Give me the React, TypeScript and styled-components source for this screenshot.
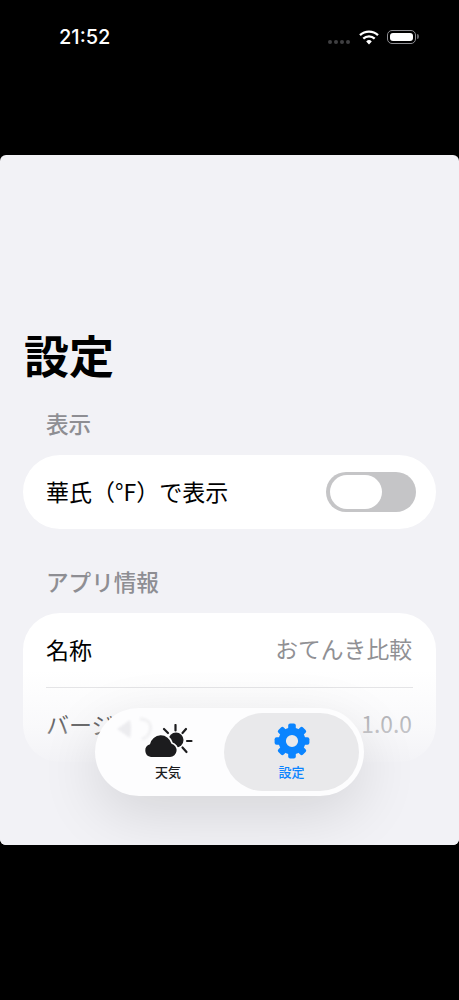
import React from "react";
import styled, { createGlobalStyle } from "styled-components";

const GlobalStyle = createGlobalStyle`
  html, body {
    margin: 0;
    padding: 0;
    background: #000;
    font-family: "Noto Sans CJK JP", "Noto Sans", sans-serif;
  }
`;

const gearAngles = [0, 45, 90, 135, 180, 225, 270, 315];
const rays = [
  [32.5, 1, 32.5, 6.5],
  [21, 5, 25, 9],
  [43, 5, 39.5, 9],
  [44, 17, 48.5, 17],
  [39.5, 23.5, 43.5, 28],
];

const App = () => {
  return (
    <>
      <GlobalStyle />
      <StatusArea>
        <Time>21:52</Time>
        <StatusIcons>
          <Signal>
            <Dot />
            <Dot />
            <Dot />
            <Dot />
          </Signal>
          <svg width="20" height="15" viewBox="0 0 20 15">
            <path d="M1 5.2a13 13 0 0 1 18 0" fill="none" stroke="#fff" strokeWidth="2.3" />
            <path d="M4.3 8.6a8.4 8.4 0 0 1 11.4 0" fill="none" stroke="#fff" strokeWidth="2.3" />
            <path d="M7.2 11.4 10 14.4l2.8-3a4 4 0 0 0-5.6 0z" fill="#fff" />
          </svg>
          <Battery>
            <BatteryFill />
          </Battery>
        </StatusIcons>
      </StatusArea>

      <Panel>
        <Title>設定</Title>

        <SectionLabel $gap={22}>表示</SectionLabel>
        <Card>
          <Row>
            <RowLabel>華氏（°F）で表示</RowLabel>
            <Switch>
              <Knob />
            </Switch>
          </Row>
        </Card>

        <SectionLabel $gap={37}>アプリ情報</SectionLabel>
        <Card>
          <Row>
            <RowLabel>名称</RowLabel>
            <RowValue>おてんき比較</RowValue>
          </Row>
          <Divider />
          <Row>
            <RowLabel>バージョン</RowLabel>
            <RowValue>1.0.0</RowValue>
          </Row>
        </Card>

        <Fade />

        <TabBar>
          <Refraction width="44" height="26" viewBox="0 0 44 26">
            <path d="M3 13 16 4q2 9 0 18z" fill="#ececef" />
            <path d="M26 3c8 0 12 5 10 12-1 4-4 7-8 8" fill="none" stroke="#f0f0f2" strokeWidth="3" />
          </Refraction>
          <Tab $shifted>
            <IconSlot>
              <svg width="50" height="34" viewBox="0 0 50 34">
                <circle cx="33" cy="16" r="7.5" fill="#1c1c1e" />
                {rays.map(([x1, y1, x2, y2]) => (
                  <line
                    key={`${x1}-${y1}`}
                    x1={x1}
                    y1={y1}
                    x2={x2}
                    y2={y2}
                    stroke="#1c1c1e"
                    strokeWidth="2.2"
                    strokeLinecap="round"
                  />
                ))}
                <path
                  d="M8 33H27a6.7 6.7 0 0 0 1.5-13.2A11 11 0 0 0 7 20.3 6.5 6.5 0 0 0 8 33Z"
                  fill="#1c1c1e"
                  stroke="#fff"
                  strokeWidth="3.4"
                  paintOrder="stroke"
                />
              </svg>
            </IconSlot>
            <TabLabel>天気</TabLabel>
          </Tab>
          <Tab $active>
            <IconSlot>
              <svg width="36" height="36" viewBox="0 0 36 36">
                {gearAngles.map((a) => (
                  <rect
                    key={a}
                    x="14.2"
                    y="0.6"
                    width="7.6"
                    height="9"
                    rx="2"
                    fill="#0a84ff"
                    transform={`rotate(${a} 18 18)`}
                  />
                ))}
                <circle cx="18" cy="18" r="9.8" fill="none" stroke="#0a84ff" strokeWidth="7.4" />
              </svg>
            </IconSlot>
            <TabLabel $active>設定</TabLabel>
          </Tab>
        </TabBar>
      </Panel>
    </>
  );
};

export default App;

const StatusArea = styled.div`
  box-sizing: border-box;
  height: 155px;
  padding: 25px 43px 0 59px;
  display: flex;
  justify-content: space-between;
  align-items: flex-start;
`;

const Time = styled.div`
  font-family: Inter, "Liberation Sans", sans-serif;
  font-size: 20px;
  font-weight: 500;
  line-height: 24px;
  color: #fff;
`;

const StatusIcons = styled.div`
  display: flex;
  align-items: center;
  gap: 8px;
  height: 24px;
`;

const Signal = styled.div`
  display: flex;
  gap: 2px;
  margin-top: 10px;
  margin-right: 1px;
`;

const Dot = styled.span`
  width: 4px;
  height: 4px;
  border-radius: 50%;
  background: #3f3f41;
`;

const Battery = styled.div`
  box-sizing: border-box;
  width: 29px;
  height: 14px;
  padding: 2px;
  border: 1px solid #8e8e93;
  border-radius: 5px;
  position: relative;

  &::after {
    content: "";
    position: absolute;
    right: -3.5px;
    top: 3px;
    width: 1.5px;
    height: 5px;
    border-radius: 0 2px 2px 0;
    background: #636366;
  }
`;

const BatteryFill = styled.div`
  height: 100%;
  border-radius: 3px;
  background: #fff;
`;

const Panel = styled.div`
  position: relative;
  box-sizing: border-box;
  height: 690px;
  padding: 169px 23px 0;
  overflow: hidden;
  border-radius: 6px;
  background: #f2f2f6;
`;

const Title = styled.h1`
  margin: 0 0 0 1px;
  font-size: 45px;
  font-weight: 700;
  line-height: 62px;
  color: #000;
`;

const SectionLabel = styled.div<{ $gap: number }>`
  margin: ${(p) => p.$gap}px 0 15px 23px;
  font-size: 22.6px;
  font-weight: 500;
  line-height: 32px;
  color: #8e8e93;
`;

const Card = styled.div`
  background: #fff;
  border-radius: 37px;
`;

const Row = styled.div`
  box-sizing: border-box;
  height: 74px;
  padding: 0 23px 2px;
  display: flex;
  justify-content: space-between;
  align-items: center;
`;

const RowLabel = styled.div`
  font-size: 23px;
  line-height: 32px;
  color: #000;
`;

const RowValue = styled.div`
  margin-right: 1px;
  font-size: 22.8px;
  line-height: 32px;
  color: #909094;
`;

const Divider = styled.div`
  height: 1px;
  margin: 0 23px;
  background: #e2e2e4;
`;

const Switch = styled.div`
  box-sizing: border-box;
  width: 90px;
  height: 40px;
  margin: 2px -3px 0 0;
  padding: 3px 4px;
  border-radius: 20px;
  background: #c5c5c7;
`;

const Knob = styled.div`
  width: 52px;
  height: 34px;
  border-radius: 17px;
  background: #fff;
`;

const Fade = styled.div`
  position: absolute;
  left: 0;
  right: 0;
  bottom: 0;
  height: 175px;
  background: linear-gradient(
    to bottom,
    rgba(242, 242, 246, 0) 0%,
    rgba(242, 242, 246, 0.45) 32%,
    rgba(242, 242, 246, 1) 56%
  );
`;

const TabBar = styled.nav`
  position: absolute;
  left: 95px;
  top: 553px;
  box-sizing: border-box;
  width: 269px;
  height: 88px;
  padding: 5px;
  display: grid;
  grid-template-columns: 124px 135px;
  border-radius: 44px;
  background: #fdfdfe;
  box-shadow: 0 18px 60px rgba(0, 0, 0, 0.12);
`;

const Refraction = styled.svg`
  position: absolute;
  left: 19px;
  top: 8px;
  filter: blur(0.8px);
`;

const Tab = styled.div<{ $active?: boolean; $shifted?: boolean }>`
  position: relative;
  display: flex;
  flex-direction: column;
  align-items: center;
  justify-content: flex-start;
  padding: 10px 0 0 ${(p) => (p.$shifted ? 12 : 0)}px;
  border-radius: 39px;
  background: ${(p) => (p.$active ? "#e9e9eb" : "transparent")};
`;

const IconSlot = styled.div`
  height: 36px;
  display: flex;
  align-items: center;
  justify-content: center;
`;

const TabLabel = styled.span<{ $active?: boolean }>`
  margin-top: 4px;
  font-size: 13px;
  font-weight: 500;
  line-height: 18px;
  color: ${(p) => (p.$active ? "#0a84ff" : "#1c1c1e")};
`;
